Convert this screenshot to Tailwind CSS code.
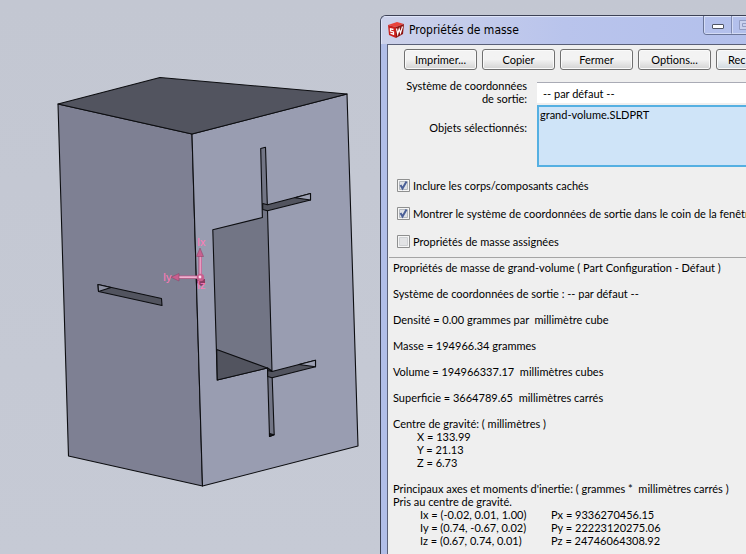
<!doctype html>
<html lang="fr">
  <head>
    <meta charset="UTF-8" />
    <meta name="viewport" content="width=device-width, initial-scale=1.0" />
    <title>Propriétés de masse</title>
    <script src="https://cdn.jsdelivr.net/npm/@tailwindcss/browser@4"></script>
  </head>

  <body class="bg-[#c4c8d3]">
    <div class="flex h-screen overflow-hidden bg-linear-to-b from-[#c3c7d2] to-[#c6cad5] font-[Lato,'DejaVu_Sans_Condensed',sans-serif] text-[11px] leading-[13px] text-black">
      <!-- 3D view -->
      <main class="shrink-0">
        <svg class="w-[380px]" viewBox="0 0 380 554" role="img" aria-label="Pièce grand-volume">
          <defs>
            <linearGradient id="shaft-v" x1="0" x2="1" y1="0" y2="0">
              <stop offset="0" stop-color="#a04a76" />
              <stop offset=".5" stop-color="#f0a8cc" />
              <stop offset="1" stop-color="#b8588a" />
            </linearGradient>
            <linearGradient id="shaft-h" x1="0" x2="0" y1="0" y2="1">
              <stop offset="0" stop-color="#b8588a" />
              <stop offset=".5" stop-color="#ffc4e0" />
              <stop offset="1" stop-color="#8e3f68" />
            </linearGradient>
          </defs>
          <g stroke="#0c0d10" stroke-width="1.1" stroke-linejoin="round">
            <path fill="#7e8093" d="M58 104 192 134 202.500 486 68.500 456Z" />
            <path fill="#999db1" d="M192 134 347 94 358 446 202.500 486Z" />
            <path fill="#52545f" d="M58 104 160 77.500 347 94 192 134Z" />
            <!-- slot in the left face -->
            <path fill="#52545f" d="M98 284.500 161.500 298.500 162 305.500 98.500 291.500Z" />
            <path fill="#8e91a3" d="M98 284.500 111 287.500 98.500 291.500Z" />
            <!-- pocket and vertical slots -->
            <path fill="#727585" d="M260.700 148.500 265.500 147.300 267.500 210.500 272 371 267.500 368 217.300 380 212.800 229.800 262.400 217.500Z" />
            <path fill="#52545f" d="M216.700 349.500 267.300 368 217.300 380Z" />
            <path fill="#727585" d="M267.500 368 269.500 436.500 274.200 434.800 272 372Z" />
            <path fill="#1c1d22" d="M269.500 433.500 274 434.800 269.500 436.500Z" />
            <!-- side slots -->
            <path fill="#52545f" d="M262.700 203.500 267.500 204.700 310.500 193.500 310.500 200 267.500 210.800 262.700 209.500Z" />
            <path fill="#9da1b4" d="M295 197.700 310.500 193.500 310.500 200Z" />
            <path fill="#52545f" d="M267.700 370.500 272 371.500 315.500 360.300 315.500 366.700 272 377.700 267.700 376.500Z" />
            <path fill="#9da1b4" d="M299 364.500 315.500 360.300 315.500 366.700Z" />
          </g>
          <!-- principal axes -->
          <rect x="198.500" y="256" width="3.500" height="19" fill="url(#shaft-v)" />
          <path fill="#c8608f" stroke="#8a3c62" stroke-width=".5" d="M200 248 196.500 256.500 203.500 256.500Z" />
          <rect x="178" y="275.500" width="20" height="3.500" fill="url(#shaft-h)" />
          <path fill="#c8608f" stroke="#8a3c62" stroke-width=".5" d="M171 277.200 179 273.500 179 281Z" />
          <path fill="#8a3c62" d="M197 279 205 279 205 284 201 286 197 283Z" />
          <circle cx="200.500" cy="277.500" r="3.700" fill="#c8608f" />
          <circle cx="200" cy="277" r="1.400" fill="#ffe0ef" />
          <g fill="#ff7ab8" class="font-['Liberation_Sans',sans-serif] text-[11px]">
            <text x="197" y="246">Ix</text>
            <text x="163" y="281">Iy</text>
            <text x="197" y="289">Iz</text>
          </g>
        </svg>
      </main>

      <!-- Dialog -->
      <section class="mt-[15px] flex min-w-0 flex-1 flex-col overflow-hidden rounded-tl-[6px] border-t border-l border-[#3d4256] bg-[#b1bee8]" aria-labelledby="dialog-title">
        <header class="flex h-7 shrink-0 border-t border-l border-[#dfe5f8] bg-linear-to-r from-[#cdd2ea] via-[#b9c4ec] to-[#b3c0ec]">
          <svg class="mt-[5px] ml-[6px] size-4 shrink-0" viewBox="0 0 16 16" aria-hidden="true">
            <path fill="#e8443c" d="M0 3 9 0 16 2 8 5Z" />
            <path fill="#c9201c" d="M0 3 8 5 8 16 1 13Z" />
            <path fill="#8e1512" d="M8 5 16 2 15 12 8 16Z" />
            <path fill="none" stroke="#fff" stroke-width="1.300" d="M5.500 7.500 2.500 6.800 2.500 9 5.500 10 5.500 12.300 2.500 11.200" />
            <path fill="none" stroke="#fff" stroke-width="1.200" d="M8.500 6.500 9.700 12 11.200 7 12.500 11 14.500 4.500" />
          </svg>
          <h1 id="dialog-title" class="mt-[5px] ml-[5px] flex-1 font-['DejaVu_Sans_Condensed',sans-serif] text-[12px] leading-4 whitespace-nowrap">Propriétés de masse</h1>
          <div class="-mt-px flex h-[19px] w-[43px] shrink-0 overflow-hidden rounded-bl-[4px] border-b border-l border-[#6b7698]">
            <button type="button" aria-label="Réduire" class="flex w-7 shrink-0 items-center justify-center border-r border-b border-l border-r-[#7f8ab0] border-b-[#d3dbf5] border-l-[#d3dbf5]">
              <span class="mt-1 h-[5px] w-3 rounded-[1px] border border-[#4f5566] bg-white"></span>
            </button>
            <button type="button" aria-label="Agrandir" class="flex w-7 shrink-0 items-center border-b border-l border-[#d3dbf5] pl-[6px]">
              <svg class="h-[10px] w-3" viewBox="0 0 12 10" fill="#c9d1ee" stroke="#929cc2"><path d="M.5.5H11.500V9.500H.5Z" /><path d="M3.500 3.500H8.500V6.500H3.500Z" /></svg>
            </button>
          </div>
        </header>

        <div class="ml-[6px] flex-1 overflow-hidden border-t border-l border-[#5a6078] bg-[#efefef] whitespace-nowrap">
          <div class="mt-1 ml-4 flex gap-[5px]">
            <button type="button" class="h-[21px] w-[73px] shrink-0 rounded-[3px] border border-[#707070] bg-linear-to-b from-[#f3f3f3] from-50% to-[#d3d3d3] shadow-[inset_0_0_0_1px_#fafafa]">Imprimer...</button>
            <button type="button" class="h-[21px] w-[73px] shrink-0 rounded-[3px] border border-[#707070] bg-linear-to-b from-[#f3f3f3] from-50% to-[#d3d3d3] shadow-[inset_0_0_0_1px_#fafafa]">Copier</button>
            <button type="button" class="h-[21px] w-[73px] shrink-0 rounded-[3px] border border-[#707070] bg-linear-to-b from-[#f3f3f3] from-50% to-[#d3d3d3] shadow-[inset_0_0_0_1px_#fafafa]">Fermer</button>
            <button type="button" class="h-[21px] w-[73px] shrink-0 rounded-[3px] border border-[#707070] bg-linear-to-b from-[#f3f3f3] from-50% to-[#d3d3d3] shadow-[inset_0_0_0_1px_#fafafa]">Options...</button>
            <button type="button" class="h-[21px] w-[73px] shrink-0 rounded-[3px] border border-[#707070] bg-linear-to-b from-[#f0f3f5] from-50% to-[#cfd8de] pl-[11px] text-left shadow-[inset_0_0_0_1px_#fafafa]">Rec</button>
          </div>

          <div class="mt-[9px] grid grid-cols-[139px_1fr] gap-x-[10px]">
            <label for="coord-system" class="text-right">Système de coordonnées<br />de sortie:</label>
            <select id="coord-system" class="mt-[3px] h-[21px] w-full appearance-none border-t border-[#a9abb5] bg-white pl-[6px]">
              <option>-- par défaut --</option>
            </select>
            <label for="selected-items" class="mt-4 text-right">Objets sélectionnés:</label>
            <textarea id="selected-items" readonly class="h-[62px] w-full resize-none overflow-hidden border-2 border-r-0 border-[#55b0e2] bg-[#cfe4f8] px-px pt-px">grand-volume.SLDPRT</textarea>
          </div>

          <div class="mt-3 ml-[9px] flex flex-col gap-[15px]">
            <label class="flex items-center gap-[3px]">
              <input type="checkbox" checked class="peer sr-only" />
              <svg class="size-[13px] shrink-0" viewBox="0 0 13 13" aria-hidden="true">
                <path fill="#f6f6f6" stroke="#8e8f8f" d="M.5.5H12.500V12.500H.5Z" />
                <path fill="#dfe2e6" stroke="#b5b9bf" d="M2.500 2.500H10.500V10.500H2.500Z" />
                <path fill="none" stroke="#4a5f97" stroke-width="2" d="M3.500 6 5.500 9.500 9.500 2.500" />
              </svg>
              Inclure les corps/composants cachés
            </label>
            <label class="flex items-center gap-[3px]">
              <input type="checkbox" checked class="peer sr-only" />
              <svg class="size-[13px] shrink-0" viewBox="0 0 13 13" aria-hidden="true">
                <path fill="#f6f6f6" stroke="#8e8f8f" d="M.5.5H12.500V12.500H.5Z" />
                <path fill="#dfe2e6" stroke="#b5b9bf" d="M2.500 2.500H10.500V10.500H2.500Z" />
                <path fill="none" stroke="#4a5f97" stroke-width="2" d="M3.500 6 5.500 9.500 9.500 2.500" />
              </svg>
              Montrer le système de coordonnées de sortie dans le coin de la fenêtre
            </label>
            <label class="flex items-center gap-[3px]">
              <input type="checkbox" class="peer sr-only" />
              <svg class="size-[13px] shrink-0" viewBox="0 0 13 13" aria-hidden="true">
                <path fill="#f6f6f6" stroke="#8e8f8f" d="M.5.5H12.500V12.500H.5Z" />
                <path fill="#e2e3e5" stroke="#cfd1d4" d="M2.500 2.500H10.500V10.500H2.500Z" />
              </svg>
              Propriétés de masse assignées
            </label>
          </div>

          <!-- Results -->
          <div class="mt-[9px] ml-px flex flex-col gap-[13px] border-t border-[#a5a5a5] pt-[3px] pl-1">
            <p>Propriétés de masse de grand-volume ( Part Configuration - Défaut )</p>
            <p>Système de coordonnées de sortie : -- par défaut --</p>
            <p>Densité = 0.00 grammes par&nbsp; millimètre cube</p>
            <p>Masse = 194966.34 grammes</p>
            <p>Volume = 194966337.17&nbsp; millimètres cubes</p>
            <p>Superficie = 3664789.65&nbsp; millimètres carrés</p>
            <div>
              <p>Centre de gravité: ( millimètres )</p>
              <ul class="pl-6">
                <li>X = 133.99</li>
                <li>Y = 21.13</li>
                <li>Z = 6.73</li>
              </ul>
            </div>
            <div>
              <p>Principaux axes et moments d'inertie: ( grammes *&nbsp; millimètres carrés )</p>
              <p>Pris au centre de gravité.</p>
              <table class="ml-[27px]">
                <tr><td class="w-[131px]">Ix = (-0.02, 0.01, 1.00)</td><td>Px = 9336270456.15</td></tr>
                <tr><td>Iy = (0.74, -0.67, 0.02)</td><td>Py = 22223120275.06</td></tr>
                <tr><td>Iz = (0.67, 0.74, 0.01)</td><td>Pz = 24746064308.92</td></tr>
              </table>
            </div>
          </div>
        </div>
      </section>
    </div>
  </body>
</html>
